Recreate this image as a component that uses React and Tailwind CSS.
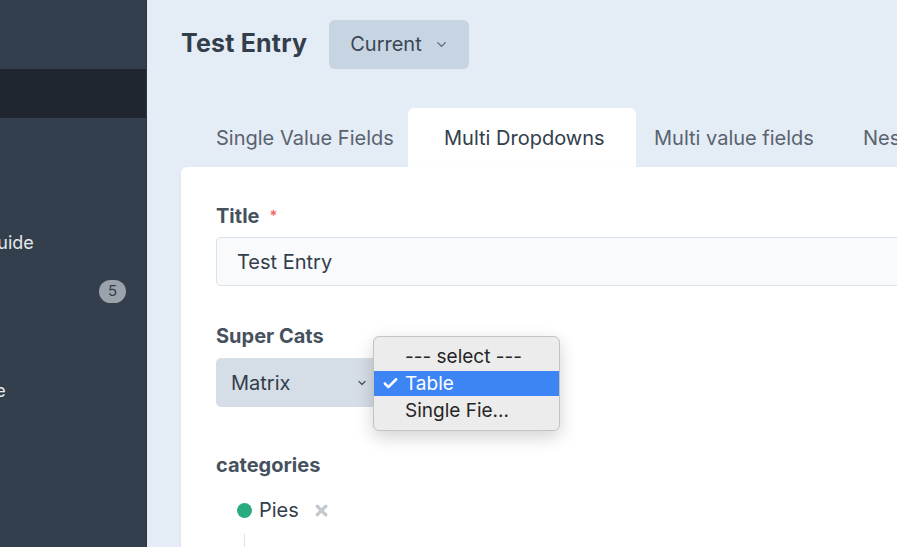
import { ChevronDown, Check, X } from "lucide-react";

export default function App() {
  return (
    <div
      className="flex h-[547px] w-[897px] overflow-hidden bg-[#e4ecf5]"
      style={{ fontFamily: "Inter, 'Noto Sans', sans-serif" }}
    >
      {/* SIDEBAR */}
      <div className="flex w-[147px] shrink-0 flex-col overflow-hidden border-r border-[#2a333e] bg-[#333f4c] text-[18px] text-[#e5e9ee]">
        <div className="h-[69px] shrink-0" />
        <div className="h-[49px] shrink-0 bg-[#1f2630]" />
        <div className="h-[100px] shrink-0" />
        <div className="flex h-[48px] items-center whitespace-nowrap">
          <span className="-ml-[64px]">Style Guide</span>
        </div>
        <div className="flex h-[50px] items-center justify-end pr-[20px]">
          <span className="flex h-[23px] w-[27px] items-center justify-center rounded-full bg-[#9aa2ab] text-[15px] text-[#333f4c]">
            5
          </span>
        </div>
        <div className="h-[50px]" />
        <div className="flex h-[48px] items-center whitespace-nowrap">
          <span className="-ml-[73px]">Structure</span>
        </div>
      </div>

      {/* MAIN */}
      <div className="flex min-w-0 flex-1 flex-col pl-[34px]">
        {/* HEADER */}
        <div className="flex h-[89px] shrink-0 items-center gap-[22px] pb-[2px] pt-[1px]">
          <h1 className="text-[25px] font-bold tracking-[0.2px] text-[#323e4b]">Test Entry</h1>
          <button className="flex h-[49px] items-center gap-[12px] rounded-[6px] bg-[#c7d5e3] pl-[21px] pr-[20px] text-[20px] text-[#3b4653]">
            Current
            <ChevronDown size={15} strokeWidth={2} className="text-[#5b6673]" />
          </button>
        </div>

        {/* TABS */}
        <div className="flex h-[78px] shrink-0 items-stretch whitespace-nowrap pt-[19px] text-[20px] text-[#59636f]">
          <div className="flex w-[227px] shrink-0 items-center pl-[35px]">Single Value Fields</div>
          <div className="flex w-[228px] shrink-0 items-center rounded-t-[6px] bg-white pl-[36px] text-[#323e4b]">
            Multi Dropdowns
          </div>
          <div className="flex w-[227px] shrink-0 items-center pl-[18px]">Multi value fields</div>
          <div className="flex shrink-0 items-center">Nested Fields</div>
        </div>

        {/* CARD */}
        <div className="flex-1 rounded-tl-[6px] bg-white pl-[35px] pt-[37px] shadow-[0_1px_3px_rgba(0,0,0,0.06)]">
          <div className="flex items-center gap-[10px] text-[20px] font-bold leading-[24px] text-[#46515e]">
            Title
            <span className="text-[14px] text-[#f26b6b]">*</span>
          </div>
          <div className="mt-[9px] flex h-[49px] items-center rounded-l-[5px] border border-r-0 border-[#dce2e9] bg-[#f9fafc] pl-[20px] text-[20px] text-[#323e4b]">
            Test Entry
          </div>

          <div className="mt-[38px] text-[20px] font-bold leading-[24px] text-[#46515e]">Super Cats</div>
          <div className="relative mt-[10px] h-[49px]">
            <div className="flex h-[49px] w-[170px] items-center rounded-[5px] bg-[#d5dde6] pl-[15px] text-[20px] text-[#323e4b]">
              Matrix
              <ChevronDown size={12} strokeWidth={2.5} className="ml-[66px] text-[#4a5563]" />
            </div>
            {/* open select menu */}
            <div className="absolute left-[157px] top-[-22px] w-[187px] rounded-[6px] border border-[#c3c3c3] bg-[#ececec] py-[5px] text-[19px] leading-[24px] text-[#262626] shadow-[0_6px_18px_rgba(0,0,0,0.18)]">
              <div className="flex h-[29px] items-center pl-[31px]">--- select ---</div>
              <div className="flex h-[25px] items-center bg-[#3d84f5] text-white">
                <Check size={17} strokeWidth={3.5} className="ml-[8px] mr-[6px]" />
                Table
              </div>
              <div className="flex h-[29px] items-center pl-[31px]">Single Fie...</div>
            </div>
          </div>

          <div className="mt-[46px] text-[20px] font-bold leading-[24px] text-[#46515e]">categories</div>
          <div className="mt-[21px] flex items-center pl-[21px] text-[20px] leading-[24px] text-[#323e4b]">
            <span className="h-[15px] w-[15px] rounded-full bg-[#2aaa7f]" />
            <span className="ml-[7px]">Pies</span>
            <X size={17} strokeWidth={4.5} className="ml-[14px] text-[#c4c9cf]" />
          </div>
          <div className="ml-[28px] mt-[12px] h-[30px] w-px bg-[#dde2e8]" />
        </div>
      </div>
    </div>
  );
}
